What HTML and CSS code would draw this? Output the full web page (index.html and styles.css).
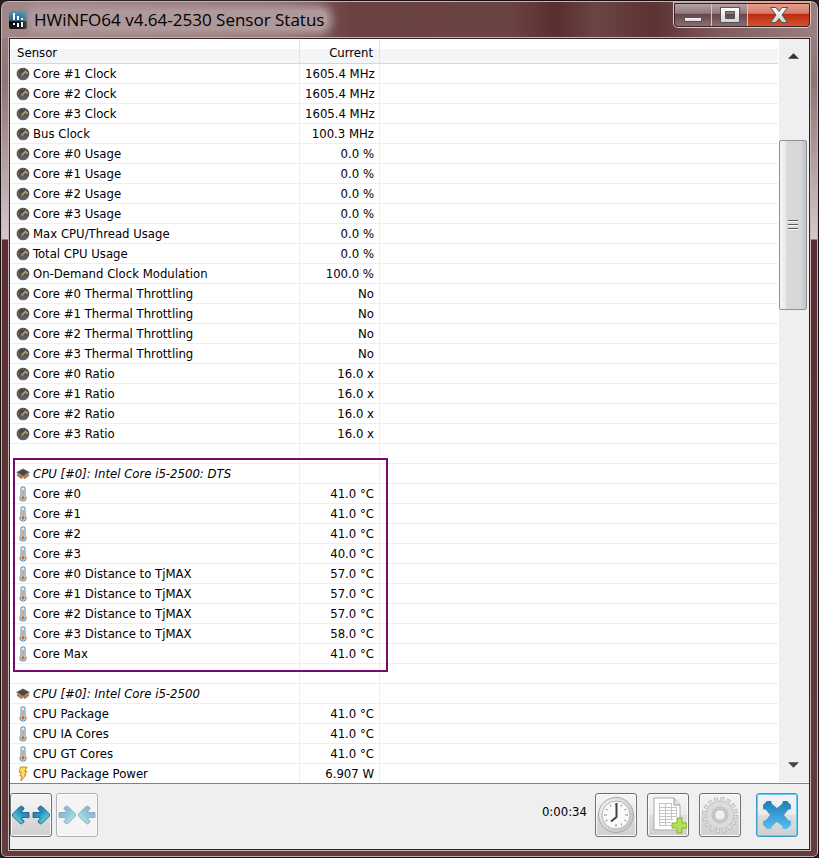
FILE: index.html
```html
<!DOCTYPE html>
<html lang="en">
<head>
<meta charset="utf-8">
<title>HWiNFO64 v4.64-2530 Sensor Status</title>
<link rel="stylesheet" href="styles.css">
</head>
<body>
<svg class="defs" aria-hidden="true">
  <defs>
    <linearGradient id="dial" x1="0" y1="0" x2="0" y2="1"><stop offset="0" stop-color="#3a3a3a"/><stop offset="1" stop-color="#6a6a6a"/></linearGradient>
    <linearGradient id="blueR" x1="0" y1="0" x2="1" y2="1"><stop offset="0" stop-color="#1b6eb4"/><stop offset=".45" stop-color="#2a93c4"/><stop offset="1" stop-color="#7ff0dc"/></linearGradient>
    <linearGradient id="blueX" x1="0" y1="0" x2="0" y2="1"><stop offset="0" stop-color="#1f7fb8"/><stop offset="1" stop-color="#58bdf0"/></linearGradient>
    <linearGradient id="glyph" x1="0" y1="0" x2="0" y2="1"><stop offset="0" stop-color="#fff"/><stop offset="1" stop-color="#d2d2d2"/></linearGradient>
    <linearGradient id="logo" x1="0" y1="0" x2="0" y2="1"><stop offset="0" stop-color="#4a9cc0"/><stop offset=".55" stop-color="#1d5f80"/><stop offset=".6" stop-color="#000"/><stop offset="1" stop-color="#1a1a1a"/></linearGradient>
    <linearGradient id="ring" x1="0" y1="0" x2="1" y2="1"><stop offset="0" stop-color="#f4f4f4"/><stop offset="1" stop-color="#bdbdbd"/></linearGradient>
    <symbol id="gauge" viewBox="0 0 14 14">
      <circle cx="7" cy="7" r="6.3" fill="url(#dial)"/>
      <path d="M2.200 6.500A4.900 4.900 0 0 1 10 2.800" fill="none" stroke="#aaa" stroke-width="1" stroke-dasharray="1 1.400"/>
      <path d="M6.600 7.400 10.200 3.800M10 6h2" stroke="#dda055" stroke-width="1.600"/>
      <circle cx="6.400" cy="7.400" r="1.500" fill="#858585"/>
    </symbol>
    <symbol id="thermo" viewBox="0 0 14 16">
      <path d="M5 2.200Q5 .8 7 .8t2 1.400V9.600Q10.300 10.800 10.100 12.400 9.800 15 7 15T3.900 12.400Q3.700 10.800 5 9.600Z" fill="#e4f2fb" stroke="#6f9fbe" stroke-width="1.200"/>
      <path d="M7 4v8" stroke="#d98a50" stroke-width="1.400"/><circle cx="7" cy="12" r="1.800" fill="#d4641c"/>
    </symbol>
    <symbol id="chip" viewBox="0 0 16 14">
      <path d="M1 6v3l5 4 2-2 2 2 5-4V6L8 9Z" fill="#d0986c"/>
      <path d="M2.500 7v3M4.500 8v3.400M6.500 9v3M9.500 9v3M11.500 8v3.400M13.500 7v3" stroke="#7d5238" stroke-width=".8"/>
      <path d="M8 1 15.500 5 8 9.600 .5 5Z" fill="#484848" stroke="#888" stroke-width=".6"/>
    </symbol>
    <symbol id="bolt" viewBox="0 0 14 16">
      <path d="M4.500 1H11L8.600 5.300H11L8.500 9H10L4.800 15l1.200-5H3.800L5.500 6.200H3.200Z" fill="#ffe04b" stroke="#c2873a" stroke-width="1"/>
    </symbol>
    <symbol id="arrow" viewBox="0 0 18 20">
      <path d="M1 7.500h7V6L6 4V3l2.500-2 2 1L17.500 9v2l-7 7-2 1L6 17v-1l2-2v-1.500H1Z" fill="url(#blueR)" stroke="#1d5878" stroke-width=".8"/>
    </symbol>
  </defs>
</svg>
<div class="window">
  <header class="titlebar">
    <svg class="logo" viewBox="0 0 18 18" aria-hidden="true"><rect width="18" height="18" rx="2" fill="url(#logo)"/><path d="M5 2v7M9 5v4M13 7v2M5 12v2M9 12v4M13 11v5" stroke="#fff" stroke-width="2"/></svg>
    <h1 class="title">HWiNFO64 v4.64-2530 Sensor Status</h1>
    <div class="caption">
      <button class="cap cap-min" aria-label="Minimize"><svg viewBox="0 0 20 18"><path d="M1.500 11.500h17v4h-17Z" fill="url(#glyph)" stroke="#555"/></svg></button>
      <button class="cap" aria-label="Maximize"><svg viewBox="0 0 20 18"><path fill-rule="evenodd" d="M.5 1.500h19v15H.5ZM5.500 5.500v7h9v-7Z" fill="url(#glyph)" stroke="#54545c"/></svg></button>
      <button class="cap cap-close" aria-label="Close"><svg viewBox="0 0 20 18"><path d="M1.500 1.500h5.500l3 4 3-4h5.500l-5.500 7.500 5.500 7.500H13l-3-4-3 4H1.500L7 9Z" fill="url(#glyph)" stroke="#54545c"/></svg></button>
    </div>
  </header>
  <main class="client">
    <section class="sensors">
      <div class="list">
        <table class="grid">
          <colgroup><col class="c-name"><col class="c-value"><col></colgroup>
          <thead><tr><th scope="col">Sensor</th><th scope="col" class="num">Current</th><th></th></tr></thead>
          <tbody id="clocks"></tbody>
          <tbody id="dts" class="highlight"></tbody>
          <tbody id="package"></tbody>
        </table>
      </div>
      <div class="scroll">
        <button class="step" aria-label="Scroll up"><svg viewBox="0 0 12 6"><path d="M0 6 6 0l6 6Z" fill="#333"/></svg></button>
        <div class="track"><div class="thumb"><i></i><i></i><i></i></div></div>
        <button class="step" aria-label="Scroll down"><svg viewBox="0 0 12 6"><path d="M0 0h12L6 6Z" fill="#444"/></svg></button>
      </div>
    </section>
    <footer class="toolbar">
      <button class="tool" aria-label="Expand columns"><svg class="flip" viewBox="0 0 18 20"><use href="#arrow"/></svg><svg viewBox="0 0 18 20"><use href="#arrow"/></svg></button>
      <button class="tool" aria-label="Shrink columns" disabled><svg viewBox="0 0 18 20"><use href="#arrow"/></svg><svg class="flip" viewBox="0 0 18 20"><use href="#arrow"/></svg></button>
      <output class="elapsed">0:00:34</output>
      <button class="tool" aria-label="Reset timer"><svg class="big" viewBox="0 0 38 38"><circle cx="19" cy="19" r="17.500" fill="url(#ring)" stroke="#a8a8a8"/><circle cx="19" cy="19" r="14" fill="#fafafa" stroke="#b5b5b5"/><path d="M19 7v3M19 28v3M7 19h3M28 19h3M13 8.600l1 2M25 8.600l-1 2M8.600 13l2 1M29.400 13l-2 1M8.600 25l2-1M29.400 25l-2-1M25 29.400l-1-2" stroke="#888" stroke-width="1"/><path d="M19.500 7V21L14 25.500" fill="none" stroke="#444" stroke-width="2"/></svg></button>
      <button class="tool" aria-label="Log to file"><svg class="big" viewBox="0 0 38 38"><path d="M5 2h20l6 7v25H5Z" fill="#fff" stroke="#aaa"/><path d="M25 2v7h6" fill="#e3e3e3" stroke="#999"/><path d="M10 7.500h12M10 11.500h18M10 14.500h18M10 17.500h18M10 20.500h18M10 23.500h14M10 26.500h12M10 29.500h12M10.500 7v23M16.500 7v23M22.500 7v17M27.500 11v10" stroke="#c4c4c4" stroke-width="1" fill="none"/><path d="M28 22h5v5h5v5h-5v5h-5v-5h-5v-5h5Z" fill="#b6df58" stroke="#80b52c"/></svg></button>
      <button class="tool" aria-label="Settings"><svg class="big" viewBox="0 0 38 38"><circle cx="19" cy="19" r="15.500" fill="none" stroke="#b4b4b6" stroke-width="5" stroke-dasharray="3.600 2.487"/><circle cx="19" cy="19" r="14" fill="#dcdcde" stroke="#bdbdbf"/><circle cx="19" cy="19" r="15.500" fill="none" stroke="#e0e0e2" stroke-width="3.600" stroke-dasharray="2.400 3.687" stroke-dashoffset="-.6"/><circle cx="19" cy="19" r="8" fill="#cfcfd1" stroke="#bcbcbe"/><circle cx="19" cy="19" r="5.500" fill="#f0f0f0" stroke="#b0b0b0"/></svg></button>
      <button class="tool tool-close" aria-label="Close sensors"><svg class="big" viewBox="0 0 38 38"><path d="M5 9 9 5h4l1 3 5 4 5-4 1-3h4l4 4v4l-3 1-4 5 4 5 3 1v4l-4 4h-4l-1-3-5-4-5 4-1 3H9l-4-4v-4l3-1 4-5-4-5-3-1Z" fill="url(#blueX)"/></svg></button>
    </footer>
  </main>
</div>
<script src="sensors.js"></script>
</body>
</html>
```
FILE: styles.css
```css
*, *::after { box-sizing: border-box; }
body { margin: 0; background: #222; color: #000; font: 13px/18px "DejaVu Sans Condensed", "DejaVu Sans", sans-serif; }
button { padding: 0; font: inherit; }
.defs { position: absolute; width: 0; height: 0; }

.window {
  display: flex; flex-direction: column; height: 100vh; padding: 1px 8px 7px;
  border: 1px solid #161013; border-radius: 8px 8px 6px 6px;
  box-shadow: inset 0 0 0 1px #c7b3b5;
  background: linear-gradient(#9f8587 0, #8f7375 80px, #d5c8c9 238px, #5a2e30 239px, #643c3c 100%);
}
.titlebar {
  display: flex; align-items: center; height: 36px; flex: none; margin: 0 -7px; padding-left: 7px; border-radius: 6px 6px 0 0;
  background: linear-gradient(90deg, #a28789, #8e6b6e 34%, #6a4040 43%, #6c4343 62%, #592e2f 68%, #6c4444 73%, #5c3233 80%, #7f5b5e 88%, #9c8082);
}
.logo { width: 18px; height: 18px; flex: none; }
.title {
  margin: 0 0 0 4px; padding: 0 3px; font: 17px/20px "Open Sans", "Noto Sans", sans-serif; white-space: nowrap;
  background: #ae989a; box-shadow: 0 0 8px 5px #ae989a; border-radius: 8px;
}
.caption { display: flex; align-self: flex-start; margin-left: auto; margin-right: 6px; border: 1px solid #d9cacb; border-top: 0; border-radius: 0 0 5px 5px; overflow: hidden; outline: 1px solid #3c2225; outline-offset: -2px; }
.cap { display: grid; place-items: center; width: 36px; height: 25px; border: 0; border-right: 1px solid #d5c4c5; background: linear-gradient(#bca9aa, #94797b 45%, #654649 50%, #8d7375); }
.cap svg { width: 20px; height: 18px; }
.cap-min { width: 38px; }
.cap-close { width: 62px; border-right: 0; background: linear-gradient(#e5a797, #d77b67 45%, #bb2b12 50%, #d4572e); }

.client { display: flex; flex: 1; flex-direction: column; min-height: 0; border: 1px solid #302326; outline: 1px solid #c9b6b8; background: #efefef; }
.sensors { display: flex; flex: 1; min-height: 0; border-bottom: 1px solid #828282; background: #fff; }
.list { flex: 1; min-width: 0; overflow: hidden; padding: 1px 0 0 1px; }
.grid { width: 100%; border-collapse: separate; border-spacing: 0; table-layout: fixed; }
.c-name { width: 289px; }
.c-value { width: 80px; }
th { height: 24px; padding: 2px 6px 0; border-right: 1px solid #dfe1e3; border-bottom: 1px solid #d5d7da; background: linear-gradient(#fff 40%, #f3f5f7 41%, #f4f5f7); font-weight: 400; text-align: left; }
td { height: 20px; padding: 1px 5px 0; border-right: 1px solid #eee; border-bottom: 1px solid #eee; white-space: nowrap; }
th:last-child, td:last-child { border-right: 0; }
.num { text-align: right; }
.name { display: flex; align-items: center; gap: 3px; height: 18px; }
.name svg { width: 14px; height: 16px; flex: none; }
.group { font-style: italic; }
.highlight { position: relative; }
.highlight::after { content: ""; position: absolute; top: 14px; left: 2px; width: 375px; height: 214px; border: 2px solid #750b70; }

.scroll { display: flex; flex-direction: column; width: 31px; flex: none; margin-bottom: 1px; padding: 0 2px 0 0; border-left: 1px solid #fff; background: #efefef; }
.step { display: grid; place-items: center; height: 34px; border: 0; background: none; }
.step svg { width: 11px; height: 6px; }
.track { flex: 1; padding-top: 67px; }
.thumb { display: flex; flex-direction: column; align-items: center; justify-content: center; gap: 2px; height: 170px; border: 1px solid #8f9193; border-radius: 2px; background: linear-gradient(90deg, #f5f5f5, #eaeaeb 22%, #d7d9db 24%, #d5d7d9 80%, #bfc1c4); }
.thumb i { width: 10px; height: 2px; background: #555; border-bottom: 1px solid #fff; }

.toolbar { display: flex; align-items: flex-start; flex: none; gap: 4px; height: 65px; padding: 9px 11px 0 0; }
.tool { display: flex; align-items: center; justify-content: center; gap: 2px; width: 42px; height: 44px; flex: none; border: 1px solid #707070; border-radius: 3px; background: linear-gradient(#f4f4f4 0, #ebebeb 49%, #dedede 50%, #cfcfcf); box-shadow: inset 0 0 0 1px #fafafa; }
.tool svg { width: 18px; height: 20px; flex: none; }
.tool .big { width: 38px; height: 38px; }
.flip { transform: scaleX(-1); }
.tool:disabled { border-color: #adb2b5; background: #f4f4f4; }
.tool:disabled svg { opacity: .5; }
.elapsed { margin-left: auto; margin-right: 4px; line-height: 38px; }
.elapsed ~ .tool { margin-right: 6px; }
.tool-close { margin-left: 5px; border-color: #3c9cc4; box-shadow: inset 0 0 0 1px #67cdf2; }
.elapsed ~ .tool-close { margin-right: 0; }
```
FILE: sensors.js
```js
const clocks = [
  ["gauge", "Core #1 Clock", "1605.4 MHz"], ["gauge", "Core #2 Clock", "1605.4 MHz"],
  ["gauge", "Core #3 Clock", "1605.4 MHz"], ["gauge", "Bus Clock", "100.3 MHz"],
  ["gauge", "Core #0 Usage", "0.0 %"], ["gauge", "Core #1 Usage", "0.0 %"],
  ["gauge", "Core #2 Usage", "0.0 %"], ["gauge", "Core #3 Usage", "0.0 %"],
  ["gauge", "Max CPU/Thread Usage", "0.0 %"], ["gauge", "Total CPU Usage", "0.0 %"],
  ["gauge", "On-Demand Clock Modulation", "100.0 %"],
  ["gauge", "Core #0 Thermal Throttling", "No"], ["gauge", "Core #1 Thermal Throttling", "No"],
  ["gauge", "Core #2 Thermal Throttling", "No"], ["gauge", "Core #3 Thermal Throttling", "No"],
  ["gauge", "Core #0 Ratio", "16.0 x"], ["gauge", "Core #1 Ratio", "16.0 x"],
  ["gauge", "Core #2 Ratio", "16.0 x"], ["gauge", "Core #3 Ratio", "16.0 x"]
];
const dts = [
  null, ["chip", "CPU [#0]: Intel Core i5-2500: DTS", ""],
  ["thermo", "Core #0", "41.0 °C"], ["thermo", "Core #1", "41.0 °C"],
  ["thermo", "Core #2", "41.0 °C"], ["thermo", "Core #3", "40.0 °C"],
  ["thermo", "Core #0 Distance to TjMAX", "57.0 °C"], ["thermo", "Core #1 Distance to TjMAX", "57.0 °C"],
  ["thermo", "Core #2 Distance to TjMAX", "57.0 °C"], ["thermo", "Core #3 Distance to TjMAX", "58.0 °C"],
  ["thermo", "Core Max", "41.0 °C"]
];
const pack = [
  null, ["chip", "CPU [#0]: Intel Core i5-2500", ""],
  ["thermo", "CPU Package", "41.0 °C"], ["thermo", "CPU IA Cores", "41.0 °C"],
  ["thermo", "CPU GT Cores", "41.0 °C"], ["bolt", "CPU Package Power", "6.907 W"]
];
const row = r => r
  ? `<tr class="${r[0] === "chip" ? "group" : ""}"><td><div class="name"><svg aria-hidden="true"><use href="#${r[0]}"/></svg><span>${r[1]}</span></div></td><td class="num">${r[2]}</td><td></td></tr>`
  : "<tr><td></td><td></td><td></td></tr>";
for (const [id, rows] of [["clocks", clocks], ["dts", dts], ["package", pack]]) {
  document.getElementById(id).innerHTML = rows.map(row).join("");
}
```
